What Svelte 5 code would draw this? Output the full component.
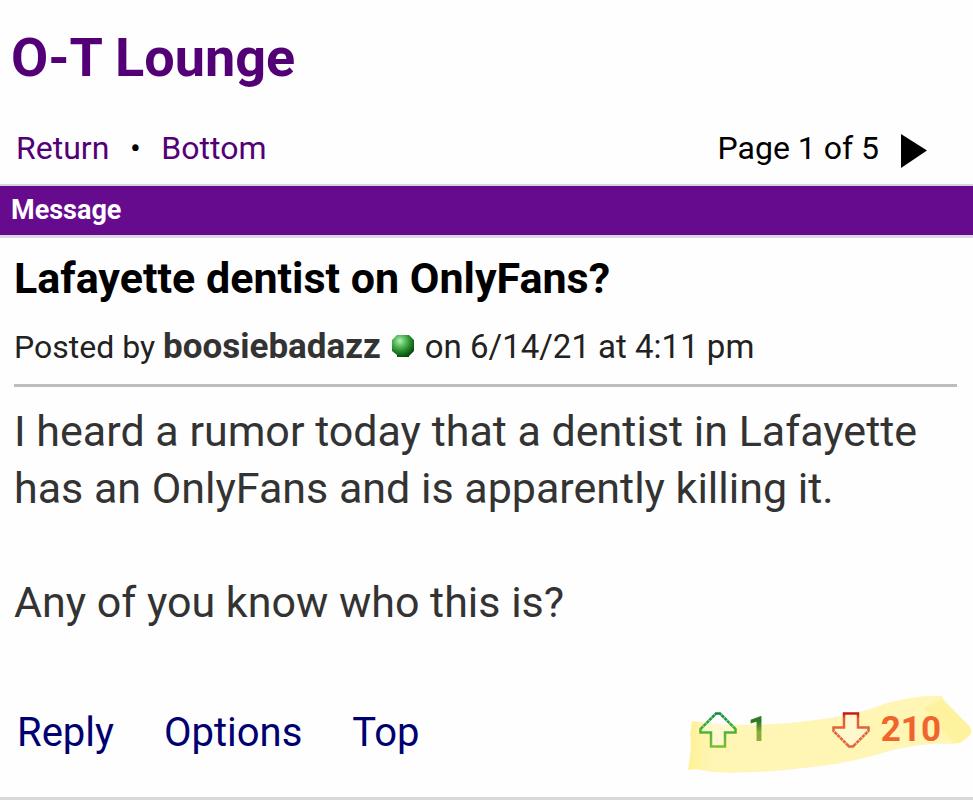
<script>
  const paragraphs = [
    'I heard a rumor today that a dentist in Lafayette has an OnlyFans and is apparently killing it.',
    'Any of you know who this is?'
  ];
  const actions = ['Reply', 'Options', 'Top'];
  let up = $state(1);
  let down = $state(210);
</script>

<header>
  <h1>O-T Lounge</h1>
  <div class="nav">
    <nav><a href="#return">Return</a><span class="dot">•</span><a href="#bottom">Bottom</a></nav>
    <div class="pages">
      <span>Page 1 of 5</span>
      <a href="#next" aria-label="Next page">
        <svg width="26" height="34" viewBox="0 0 26 34"><path d="M0 0L26 16.500L0 34Z" fill="#000" /></svg>
      </a>
    </div>
  </div>
</header>
<main>
  <div class="bar">Message</div>
  <article>
    <h2>Lafayette dentist on OnlyFans?</h2>
    <p class="meta">
      Posted by <b>boosiebadazz</b>
      <svg class="ball" width="24" height="24" viewBox="0 0 24 24" role="img" aria-label="Online">
        <defs>
          <radialGradient id="ball" cx="0.36" cy="0.27" r="0.75">
            <stop offset="0" stop-color="#b4efb5" />
            <stop offset="0.3" stop-color="#62c365" />
            <stop offset="0.65" stop-color="#23882a" />
            <stop offset="1" stop-color="#064b0b" />
          </radialGradient>
        </defs>
        <path d="M6 1H18L20 3L23 6V17L18 22V23H6V21L1 17V6L4 3Z" fill="url(#ball)" />
      </svg>
      <time datetime="2021-06-14T16:11">on 6/14/21 at 4:11 pm</time>
    </p>
    <div class="body">
      {#each paragraphs as text}<p>{text}</p>{/each}
    </div>
    <footer>
      <div class="actions">
        {#each actions as name}<a href={'#' + name.toLowerCase()}>{name}</a>{/each}
      </div>
      <div class="votes">
        <svg class="marker" width="285" height="80" viewBox="0 0 285 80" aria-hidden="true">
          <defs>
            <linearGradient id="ink" x1="0" x2="1" y1="0" y2="0">
              <stop offset="0" stop-color="#fff196" />
              <stop offset="0.09" stop-color="#fff5b5" />
              <stop offset="1" stop-color="#fff5b5" />
            </linearGradient>
          </defs>
          <path d="M4 26C30 30 68 31 100 28C135 25 165 20 188 12C210 4 234 0 254 1L256 5L282 32Q285 37 281 41L272 48L264 49C240 48 224 51 205 55C185 61 160 68 132 71C95 76 55 79 25 77C14 75 7 73 0 75C2 62 4 48 2 40Z" fill="url(#ink)" />
          <path d="M236 13L254 4L282 32Q285 37 281 41L272 48L266 48Z" fill="#fff29f" />
        </svg>
        <button type="button" class="up" aria-label="Upvote" onclick={() => up++}>
          <svg width="38" height="36" viewBox="0 0 38 36">
            <defs>
              <linearGradient id="leaf" x1="0" x2="0" y1="0" y2="1">
                <stop offset="0" stop-color="#078c39" />
                <stop offset="0.45" stop-color="#43b13c" />
                <stop offset="1" stop-color="#7cbd31" />
              </linearGradient>
            </defs>
            <path d="M17 1.500H21L36.500 17V20.500H26V34.500H12V20.500H1.500V17Z" fill="#fff" fill-opacity="0.35" stroke="url(#leaf)" stroke-width="2.500" />
            <path d="M16 2.500L2 16.500M22 2.500L36 16.500" stroke="#c9edc9" stroke-opacity="0.7" stroke-width="2.500" stroke-dasharray="1 3" />
          </svg>
          <span>{up}</span>
        </button>
        <button type="button" class="down" aria-label="Downvote" onclick={() => down++}>
          <svg width="38" height="36" viewBox="0 0 38 36">
            <defs>
              <linearGradient id="ember" x1="0" x2="0" y1="0" y2="1">
                <stop offset="0" stop-color="#c91510" />
                <stop offset="0.15" stop-color="#e25e38" />
                <stop offset="1" stop-color="#df6a38" />
              </linearGradient>
            </defs>
            <path d="M12 1.500H26V15.500H36.500V19L21 34.500H17L1.500 19V15.500H12Z" fill="#fff" fill-opacity="0.35" stroke="url(#ember)" stroke-width="2.500" />
            <path d="M2 19.500L16 33.500M36 19.500L22 33.500" stroke="#fff0c0" stroke-opacity="0.7" stroke-width="2.500" stroke-dasharray="1 3" />
          </svg>
          <span>{down}</span>
        </button>
      </div>
    </footer>
  </article>
</main>

<style>
  :global(body) {
    background: #fefefe;
    font-family: Roboto, "Liberation Sans", sans-serif;
    color: #000;
  }
  h1, h2, p { margin: 0; }
  a { text-decoration: none; color: inherit; }
  svg { display: block; }
  header { padding: 28px 11px 16px; }
  h1 { font-size: 54px; line-height: 60px; font-weight: 700; color: #530077; }
  .nav {
    display: flex;
    justify-content: space-between;
    margin-top: 40px;
    padding: 0 35px 0 5px;
    font-size: 32px;
    line-height: 40px;
  }
  nav { display: flex; color: #530077; }
  .dot { width: 52px; text-align: center; color: #000; }
  .pages { display: flex; gap: 22px; }
  .pages a { padding-top: 6px; }
  .bar {
    padding: 0 11px;
    border-top: 2px solid #d9d3dc;
    border-bottom: 3px solid #ded6e2;
    background: #660a8e;
    background-clip: padding-box;
    color: #fff;
    font-size: 27px;
    line-height: 49px;
    font-weight: 700;
  }
  article { padding: 15px 16px 40px 14px; border-bottom: 3px solid #d8d8d8; }
  h2 { font-size: 43px; line-height: 50px; font-weight: 700; }
  .meta {
    margin-top: 24px;
    padding-bottom: 17px;
    border-bottom: 3px solid #bdbdbd;
    font-size: 32px;
    line-height: 40px;
    color: #222;
  }
  .meta b { font-size: 35px; color: #333; }
  .meta time { font-size: 33px; }
  .ball { display: inline-block; margin: 0 2px; }
  .body {
    display: flex;
    flex-direction: column;
    gap: 57px;
    margin-top: 16px;
    font-size: 43px;
    line-height: 57px;
    color: #333;
  }
  footer { display: flex; justify-content: space-between; margin-top: 78px; }
  .actions {
    display: flex;
    gap: 50px;
    padding-left: 3px;
    font-size: 40px;
    line-height: 48px;
    color: #000070;
  }
  .votes { position: relative; display: flex; gap: 64px; padding-right: 16px; height: 42px; }
  .marker { position: absolute; right: -16px; top: -14px; }
  button {
    position: relative;
    display: flex;
    align-items: center;
    gap: 11px;
    padding: 0;
    border: 0;
    background: none;
    font: 700 35px/42px Roboto, "Liberation Sans", sans-serif;
    cursor: pointer;
  }
  .up span {
    background: linear-gradient(#2c7c22 30%, #8cab3b 55%);
    background-clip: text;
    color: transparent;
  }
  .down { color: #f0652b; }
</style>
